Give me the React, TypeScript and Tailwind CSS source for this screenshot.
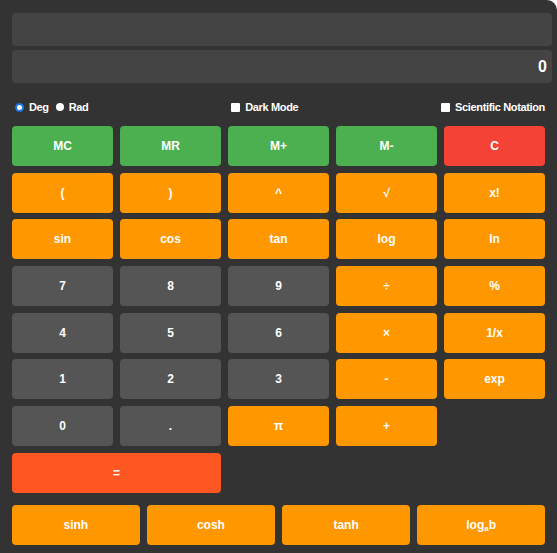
import React from "react";

type Key = { label: React.ReactNode; kind: "mem" | "clear" | "op" | "num" | "eq"; span?: boolean };

const colors: Record<Key["kind"], string> = {
  mem: "bg-[#4caf50]",
  clear: "bg-[#f44336]",
  op: "bg-[#ff9800]",
  num: "bg-[#555555]",
  eq: "bg-[#ff5722]",
};

const keys: (Key | null)[] = [
  { label: "MC", kind: "mem" },
  { label: "MR", kind: "mem" },
  { label: "M+", kind: "mem" },
  { label: "M-", kind: "mem" },
  { label: "C", kind: "clear" },
  { label: "(", kind: "op" },
  { label: ")", kind: "op" },
  { label: "^", kind: "op" },
  { label: "√", kind: "op" },
  { label: "x!", kind: "op" },
  { label: "sin", kind: "op" },
  { label: "cos", kind: "op" },
  { label: "tan", kind: "op" },
  { label: "log", kind: "op" },
  { label: "ln", kind: "op" },
  { label: "7", kind: "num" },
  { label: "8", kind: "num" },
  { label: "9", kind: "num" },
  { label: "÷", kind: "op" },
  { label: "%", kind: "op" },
  { label: "4", kind: "num" },
  { label: "5", kind: "num" },
  { label: "6", kind: "num" },
  { label: "×", kind: "op" },
  { label: "1/x", kind: "op" },
  { label: "1", kind: "num" },
  { label: "2", kind: "num" },
  { label: "3", kind: "num" },
  { label: "-", kind: "op" },
  { label: "exp", kind: "op" },
  { label: "0", kind: "num" },
  { label: ".", kind: "num" },
  { label: "π", kind: "op" },
  { label: "+", kind: "op" },
  null,
  { label: "=", kind: "eq", span: true },
];

function CalcButton({ k }: { k: Key }) {
  return (
    <button
      className={`${colors[k.kind]} ${k.span ? "col-span-2" : ""} h-10 rounded-[4px] text-white text-[12px] font-bold`}
    >
      {k.label}
    </button>
  );
}

export default function App() {
  return (
    <div
      className="min-h-[553px] w-full bg-[#333333] rounded-tr-[10px] px-3 pt-[13px] pb-2"
      style={{ fontFamily: '"Liberation Sans", Arial, sans-serif' }}
    >
      <div className="w-[540px] h-[33px] rounded-[4px] bg-[#444444]" />
      <div className="w-[540px] h-[33px] mt-1 rounded-[4px] bg-[#444444] flex items-center justify-end pr-[5px] text-white text-[16px] font-bold">
        0
      </div>

      <div className="w-[533px] mt-[15px] mb-[10px] h-[18px] flex items-center justify-between text-white text-[11px] font-bold tracking-[-0.35px]">
        <div className="flex items-center">
          <span className="ml-[3px] mr-[5px] w-[9px] h-[9px] rounded-full bg-white border-[2px] border-[#1a73e8]" />
          <span>Deg</span>
          <span className="ml-[7px] mr-[5px] w-[8px] h-[8px] rounded-full bg-white" />
          <span>Rad</span>
        </div>
        <div className="flex items-center">
          <span className="mr-[5px] w-[9px] h-[9px] rounded-[1px] bg-white" />
          <span>Dark Mode</span>
        </div>
        <div className="flex items-center">
          <span className="mr-[5px] w-[9px] h-[9px] rounded-[1px] bg-white" />
          <span>Scientific Notation</span>
        </div>
      </div>

      <div className="w-[533px] grid grid-cols-5 gap-x-[7px] gap-y-[6.67px]">
        {keys.map((k, i) => (k ? <CalcButton key={i} k={k} /> : <div key={i} />))}
      </div>

      <div className="w-[533px] mt-3 grid grid-cols-4 gap-x-[7.5px]">
        {["sinh", "cosh", "tanh"].map((t) => (
          <CalcButton key={t} k={{ label: t, kind: "op" }} />
        ))}
        <CalcButton
          k={{
            label: (
              <span>
                log<sub className="text-[8px]">a</sub>b
              </span>
            ),
            kind: "op",
          }}
        />
      </div>
    </div>
  );
}
